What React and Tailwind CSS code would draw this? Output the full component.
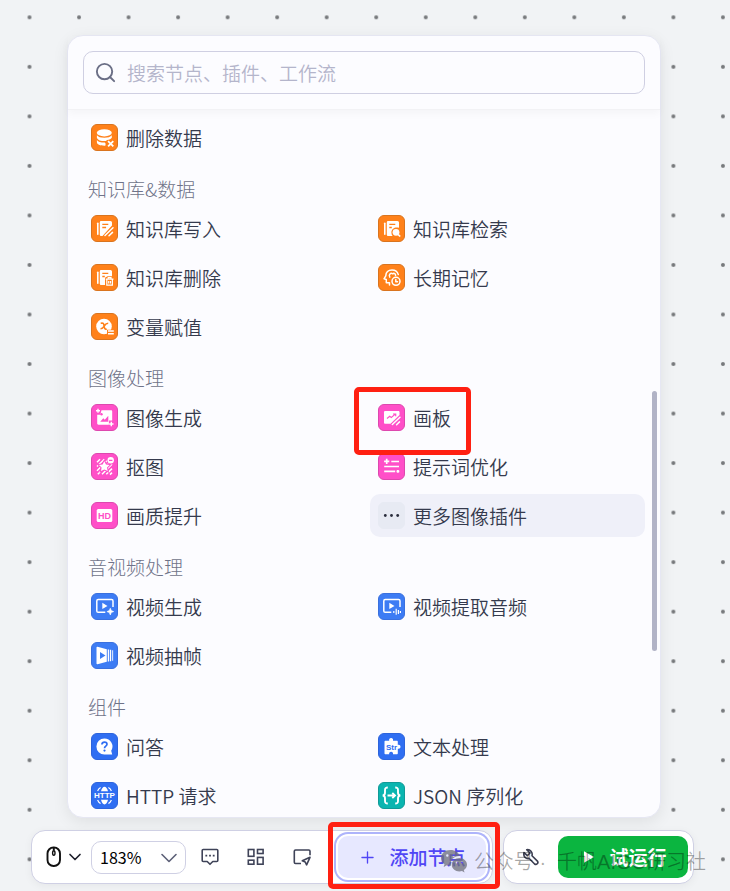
import { ChevronDown, Plus, Search } from 'lucide-react'

const tones = {
  orange: 'bg-[#ff811a] border-[#d9741f]',
  pink: 'bg-[#ff4fc8] border-[#dd48ae]',
  blue: 'bg-[#3d7cf4] border-[#3a70de]',
  deepBlue: 'bg-[#2f6ef2] border-[#2d64dc]',
  teal: 'bg-[#0ab5b0] border-[#109a97]',
  plain: 'bg-[#e7eaf3] border-[#e7eaf3]',
}

// Glyphs are drawn on a 27 x 27 grid, white unless cut out with the tile colour
const glyphs = {
  dbDelete: (
    <>
      <ellipse cx="13.3" cy="8.8" rx="7.5" ry="3.6" fill="#fff" />
      <path d="M5.900 11.300c1.200 1.700 4 2.500 7.400 2.500s6.300-.8 7.500-2.500v2.500c-.8 1.200-2.400 2-4.600 2.300l-1.400 1c-4.600.2-8.100-1-8.900-3.200z" fill="#fff" />
      <path d="M5.900 15.900c1.200 1.900 4.400 2.700 7.800 2.600l1 1.300-.4 1.900c-4.800.2-8.400-1.200-8.400-3.400z" fill="#fff" />
      <path d="M17.100 17.200l5.200 5.200M22.300 17.200l-5.200 5.200" stroke="#fff" strokeWidth="1.800" />
    </>
  ),
  docWrite: (
    <>
      <path d="M6.800 8.200v11" stroke="#fff" strokeWidth="1.600" strokeLinecap="round" />
      <path d="M10 6h9.500a1.500 1.500 0 0 1 1.500 1.500v3L11.500 21H10a1.200 1.200 0 0 1-1.200-1.200V7.200A1.200 1.200 0 0 1 10 6z" fill="#fff" />
      <path d="M11.300 9.300h6M11.300 12.500h3.800" stroke="#ff811a" strokeWidth="1.300" />
      <path d="M14 20.500l8-7.800M18 20.800l3.500-3.400" stroke="#fff" strokeWidth="1.500" strokeLinecap="round" />
    </>
  ),
  docSearch: (
    <>
      <path d="M6.800 8.200v11" stroke="#fff" strokeWidth="1.600" strokeLinecap="round" />
      <path d="M10 6h9.500a1.500 1.500 0 0 1 1.500 1.500v5.300c-3.900-1.300-7.600 1-7.600 4.600 0 1.400.4 2.600 1.200 3.600H10a1.200 1.200 0 0 1-1.200-1.200V7.200A1.200 1.200 0 0 1 10 6z" fill="#fff" />
      <path d="M11.300 9.300h6M11.300 12.500h2.500" stroke="#ff811a" strokeWidth="1.300" />
      <circle cx="18" cy="17.300" r="3.400" fill="#fff" />
      <path d="M20 19.300l2.200 2.200" stroke="#fff" strokeWidth="1.700" />
    </>
  ),
  docDelete: (
    <>
      <path d="M6.800 8.200v11" stroke="#fff" strokeWidth="1.600" strokeLinecap="round" />
      <path d="M10 6h9.500a1.500 1.500 0 0 1 1.500 1.500v4.800h-4.500l-2.500 1.500V21h-4a1.200 1.200 0 0 1-1.200-1.200V7.200A1.200 1.200 0 0 1 10 6z" fill="#fff" />
      <path d="M11.300 9.300h6M11.300 12.500h2.500" stroke="#ff811a" strokeWidth="1.300" />
      <path d="M14.700 15.200h7.800M17.200 14.900v-1.200h2.800v1.200M15.800 15.500v5.700h5.600v-5.700M17.700 17v2.500M19.500 17v2.500" stroke="#fff" strokeWidth="1.200" fill="none" />
    </>
  ),
  memory: (
    <g fill="none" stroke="#fff" strokeWidth="1.500" strokeLinecap="round" strokeLinejoin="round">
      <path d="M11.500 21v-2.200H8.300v-3.300L6 14.800l1.800-3C8 8.300 10.500 6 14 6c3.200 0 5.500 1.700 6.300 4.600" />
      <path d="M11.800 13.200c-1.500-2.700 1-4.800 2.800-3.400 1.500-1 3.100 0 3 1.700" />
      <circle cx="18" cy="17.300" r="4" />
      <path d="M17.800 15.500v2.200h1.700" />
    </g>
  ),
  assign: (
    <>
      <circle cx="13" cy="13.500" r="7.800" fill="#fff" />
      <path d="M16 16.800h7v5h-7z" fill="#ff811a" />
      <path d="M9.700 10.300c2.900-.6 2.900 0 3.400 2.800s.9 3.500 2.600 2.800M17.200 10.300c-2 0-3.100 1.400-4 2.800s-1.900 2.700-3.700 2.700" stroke="#ff811a" strokeWidth="1.600" fill="none" />
      <path d="M17 18h5.800M17 20.800h5.800" stroke="#fff" strokeWidth="1.400" />
    </>
  ),
  imageGen: (
    <>
      <path d="M10.500 6.200h9.500c.8 0 1.200.5 1.200 1.200v9.100h-3.300v4.300H7.500c-.8 0-1.300-.5-1.300-1.200v-8.800h3z" fill="#fff" />
      <path d="M9.200 17.800l3.100-3.500 1.500 1.400 3.500-4v6.100z" fill="#ff4fc8" />
      <circle cx="10.500" cy="10.300" r="1.200" fill="#ff4fc8" />
      <path d="M7 4.700v4M5 6.700h4M20.300 17.800v4.400M18.100 20h4.400" stroke="#fff" strokeWidth="1.400" />
    </>
  ),
  cutout: (
    <>
      <path d="M6 9.200l3-3M6 13.500l7.300-7.300M6 17.800L16 7.800M6.800 21.300l14-14M11 21.300l10-10M15.300 21.300l5.700-5.700M19 21.600l2-2" stroke="#fff" strokeWidth="1.500" />
      <path d="M13.300 8.300l1.700 3.200 3.600.5-2.600 2.500.7 3.600-3.400-1.700L10 18.100l.6-3.600L8 12l3.600-.5z" fill="#fff" stroke="#ff4fc8" strokeWidth="2" paintOrder="stroke" />
      <circle cx="19.700" cy="7.300" r="3.200" fill="#fff" stroke="#ff4fc8" strokeWidth="1.600" paintOrder="stroke" />
      <path d="M18 7.300h3.400" stroke="#ff4fc8" strokeWidth="1.300" />
    </>
  ),
  hd: (
    <>
      <rect x="5.700" y="7" width="15.600" height="13" rx="1.600" fill="#fff" />
      <text x="13.500" y="16.700" textAnchor="middle" fill="#ff4fc8" className="font-['Liberation_Sans'] text-[9px] font-bold">HD</text>
    </>
  ),
  board: (
    <>
      <path d="M7.300 7h12.900c.8 0 1.300.5 1.300 1.300v2.700l-9 8.700H7.300c-.8 0-1.300-.5-1.300-1.300V8.300c0-.8.500-1.300 1.300-1.300z" fill="#fff" />
      <path d="M9 14.500l2.700-2.300 1.600 1.200 4-3.300M15 10h2.700v2.300" stroke="#ff4fc8" strokeWidth="1.200" fill="none" />
      <path d="M14.300 20.500l7.700-7.200M18.600 20.700l2.900-2.800" stroke="#fff" strokeWidth="1.500" strokeLinecap="round" />
    </>
  ),
  prompt: (
    <path d="M8.700 5.700v5.200M6.100 8.300h5.200M13.300 8.500h7.700M6.200 13.500H21M6.200 18.300h11M18.500 18.300h2.800M19.900 16.900v2.800" stroke="#fff" strokeWidth="1.700" />
  ),
  more: (
    <g fill="#2a2d3c">
      <circle cx="7.300" cy="13.500" r="1.400" />
      <circle cx="13.500" cy="13.500" r="1.400" />
      <circle cx="19.700" cy="13.500" r="1.400" />
    </g>
  ),
  videoGen: (
    <>
      <path d="M14.300 19.300H7.200c-.8 0-1.400-.6-1.400-1.400V8c0-.8.600-1.400 1.400-1.400h13.400c.8 0 1.400.6 1.400 1.400v6" stroke="#fff" strokeWidth="1.500" fill="none" />
      <path d="M11.300 9.800v6.200l5.200-3.100z" fill="#fff" />
      <path d="M19.300 15.200l1 2.400 2.400 1-2.400 1-1 2.400-1-2.400-2.400-1 2.400-1z" fill="#fff" stroke="#fff" strokeWidth=".6" />
    </>
  ),
  videoAudio: (
    <>
      <path d="M13.300 19.300H7.200c-.8 0-1.400-.6-1.400-1.400V8c0-.8.600-1.400 1.400-1.400h13.400c.8 0 1.400.6 1.400 1.400v6" stroke="#fff" strokeWidth="1.500" fill="none" />
      <path d="M11.300 9.800v6.200l5.200-3.100z" fill="#fff" />
      <path d="M15.800 18v2M18.200 15.800v6M20.400 17v4M22.400 18v2" stroke="#fff" strokeWidth="1.200" />
    </>
  ),
  frames: (
    <>
      <path d="M6.500 4.800l9.300 2.400v12.600l-9.300 2.400c-.6.100-1-.3-1-.8V5.600c0-.6.400-.9 1-.8z" fill="#fff" />
      <path d="M9 10v7l5.500-3.500z" fill="#3d7cf4" />
      <path d="M17.400 7.500v12M19.500 7.800v11.400" stroke="#fff" strokeWidth="1.300" />
      <path d="M21.600 8.200v10.600" stroke="#fff" strokeWidth="1.100" opacity=".8" />
    </>
  ),
  ask: (
    <>
      <path d="M13.400 5.500a8 8 0 0 1 6.800 12.200l1 3.800h-7.800a8 8 0 0 1 0-16z" fill="#fff" />
      <path d="M10.900 11.500c.1-1.500 1.100-2.400 2.600-2.400s2.500.9 2.500 2.200c0 1.900-2.500 1.900-2.500 3.900" stroke="#2f6ef2" strokeWidth="1.700" fill="none" />
      <circle cx="13.500" cy="17.600" r="1.100" fill="#2f6ef2" />
    </>
  ),
  http: (
    <>
      <path d="M10 9.300c.8-3 2-4.600 3.500-4.600s2.700 1.600 3.500 4.600zM10 17.800c.8 3 2 4.600 3.500 4.600s2.700-1.600 3.500-4.600z" fill="#fff" />
      <path d="M6.600 9c.6-1.500 1.700-2.800 3-3.500M20.400 9c-.6-1.500-1.700-2.800-3-3.500M6.600 18c.6 1.500 1.700 2.800 3 3.500M20.400 18c-.6 1.500-1.700 2.800-3 3.500" stroke="#fff" strokeWidth="1.200" fill="none" />
      <text x="13.500" y="16.200" textAnchor="middle" fill="#fff" className="font-['Liberation_Sans'] text-[8px] font-bold">HTTP</text>
    </>
  ),
  str: (
    <>
      <path d="M7.500 7.700h3.700c-.4-1.700.5-2.700 1.900-2.700s2.300 1 1.900 2.700h3.800c.6 0 1 .4 1 1v3.200c1.700-.4 2.700.5 2.700 1.900s-1 2.300-2.700 1.900v4.600c0 .6-.4 1-1 1H15c.3-1.600-.5-2.500-1.900-2.500s-2.200.9-1.900 2.500H7.500c-.6 0-1-.4-1-1V8.700c0-.6.4-1 1-1z" fill="#fff" />
      <text x="13.600" y="17" textAnchor="middle" fill="#2f6ef2" className="font-['Liberation_Sans'] text-[8px] font-bold">Str</text>
    </>
  ),
  json: (
    <path d="M9.800 5.500C7.300 5.500 7 6.300 7 8.300v2.500c0 1.500-.6 2.500-2.300 2.700 1.700.2 2.300 1.200 2.300 2.700v2.500c0 2 .3 2.800 2.800 2.800M17.200 5.500c2.500 0 2.800.8 2.800 2.800v2.500c0 1.500.6 2.500 2.300 2.700-1.700.2-2.300 1.200-2.300 2.700v2.500c0 2-.3 2.800-2.800 2.800M9.500 13.500h7.300M14.300 10.900l2.700 2.600-2.700 2.600" stroke="#fff" strokeWidth="1.900" fill="none" />
  ),
}

const sections = [
  { items: [{ label: '删除数据', glyph: 'dbDelete', tone: 'orange' }] },
  {
    title: '知识库&数据',
    items: [
      { label: '知识库写入', glyph: 'docWrite', tone: 'orange' },
      { label: '知识库检索', glyph: 'docSearch', tone: 'orange' },
      { label: '知识库删除', glyph: 'docDelete', tone: 'orange' },
      { label: '长期记忆', glyph: 'memory', tone: 'orange' },
      { label: '变量赋值', glyph: 'assign', tone: 'orange' },
    ],
  },
  {
    title: '图像处理',
    items: [
      { label: '图像生成', glyph: 'imageGen', tone: 'pink' },
      { label: '画板', glyph: 'board', tone: 'pink', marked: true },
      { label: '抠图', glyph: 'cutout', tone: 'pink' },
      { label: '提示词优化', glyph: 'prompt', tone: 'pink' },
      { label: '画质提升', glyph: 'hd', tone: 'pink' },
      { label: '更多图像插件', glyph: 'more', tone: 'plain', active: true },
    ],
  },
  {
    title: '音视频处理',
    items: [
      { label: '视频生成', glyph: 'videoGen', tone: 'blue' },
      { label: '视频提取音频', glyph: 'videoAudio', tone: 'blue' },
      { label: '视频抽帧', glyph: 'frames', tone: 'blue' },
    ],
  },
  {
    title: '组件',
    items: [
      { label: '问答', glyph: 'ask', tone: 'deepBlue' },
      { label: '文本处理', glyph: 'str', tone: 'deepBlue' },
      { label: 'HTTP 请求', glyph: 'http', tone: 'deepBlue' },
      { label: 'JSON 序列化', glyph: 'json', tone: 'teal' },
    ],
  },
]

function DotGrid() {
  return (
    <svg className="absolute inset-0 h-full w-full" aria-hidden="true">
      <pattern id="dots" x="4.750" y="-7.450" width="49.530" height="49.530" patternUnits="userSpaceOnUse">
        <circle cx="24.760" cy="24.760" r="2" fill="#76787b" />
      </pattern>
      <rect width="100%" height="100%" fill="url(#dots)" />
    </svg>
  )
}

function NodeItem({ item }) {
  return (
    <li className="relative">
      <button
        type="button"
        className={`flex h-[43px] w-full items-center gap-2 rounded-[10px] px-2 text-left font-[350] ${item.active ? 'bg-[#eff0f9]' : ''}`}
      >
        <span className={`h-[27px] w-[27px] shrink-0 overflow-hidden rounded-md border ${tones[item.tone]}`}>
          <svg viewBox="1 1 25 25" className="block h-full w-full" fill="none" aria-hidden="true">
            {glyphs[item.glyph]}
          </svg>
        </span>
        {item.label}
      </button>
      {item.marked && (
        <span className="pointer-events-none absolute -top-[9px] -left-4 z-10 h-[68px] w-[117px] rounded-[5px] border-5 border-[#ff2012]" />
      )}
    </li>
  )
}

function NodePanel() {
  return (
    <section className="relative mr-[33px] ml-9 rounded-2xl border border-[#e6e7f3] bg-[#fcfcff] shadow-[0_4px_16px_rgba(0,0,0,0.08)]">
      <div className="border-b border-[#f2f2f5] px-[15px] py-[15px] shadow-[0_4px_8px_rgba(0,0,0,0.03)]">
        <label className="flex h-[43px] items-center gap-[10px] rounded-[10px] border border-[#cfcfe2] px-[10px]">
          <Search size={23} strokeWidth={2} className="shrink-0 text-[#6b6f86]" />
          <input
            type="text"
            aria-label="搜索节点、插件、工作流"
            placeholder="搜索节点、插件、工作流"
            className="w-full bg-transparent font-[350] outline-none placeholder:text-[#b4b5cb]"
          />
        </label>
      </div>
      <div className="px-[15px] pt-[6px]">
        {sections.map((section, i) => (
          <div key={i}>
            {section.title && (
              <h3 className="pt-4 pb-1 pl-[5px] leading-7 font-light text-[#6f7389]">{section.title}</h3>
            )}
            <ul className="grid grid-cols-2 gap-x-3 gap-y-[6px]">
              {section.items.map((item) => (
                <NodeItem key={item.label} item={item} />
              ))}
            </ul>
          </div>
        ))}
      </div>
      <div className="absolute top-[355px] right-[3px] h-[260px] w-[5px] rounded-full bg-[#b1b3c6]" />
    </section>
  )
}

function MouseIcon() {
  return (
    <svg width="16" height="22" viewBox="0 0 16 22" fill="none" stroke="#111" strokeWidth="1.900" aria-hidden="true">
      <rect x="1.500" y="1.500" width="12.500" height="18.500" rx="6" />
      <path d="M7.800 1.500v3" />
      <ellipse cx="7.800" cy="7" rx="1.200" ry="2.300" strokeWidth="1.400" />
    </svg>
  )
}

function CommentIcon() {
  return (
    <svg width="18" height="18" viewBox="0 0 18 18" fill="none" stroke="#3f4358" strokeWidth="1.600" strokeLinejoin="round" aria-hidden="true">
      <path d="M2.200 1.500h13.600c.6 0 1 .4 1 1v10c0 .6-.4 1-1 1h-4L9 16.300l-2.800-2.800h-4c-.6 0-1-.4-1-1v-10c0-.6.4-1 1-1z" />
      <path d="M4.400 7.600h1.800M8.100 7.600h1.800M11.800 7.600h1.800" strokeWidth="1.800" />
    </svg>
  )
}

function LayoutIcon() {
  return (
    <svg width="18" height="18" viewBox="0 0 18 18" fill="none" stroke="#3f4358" strokeWidth="1.600" aria-hidden="true">
      <rect x="1.300" y="1.500" width="5.600" height="6.800" />
      <rect x="10.500" y="1.500" width="5.600" height="4" />
      <rect x="1.300" y="12.200" width="5.600" height="4" />
      <rect x="10.500" y="9.400" width="5.600" height="6.800" />
    </svg>
  )
}

function CursorPanelIcon() {
  return (
    <svg width="19" height="18" viewBox="0 0 19 18" fill="none" stroke="#3f4358" strokeWidth="1.600" strokeLinejoin="round" aria-hidden="true">
      <path d="M8 15.500H2.500c-.7 0-1.200-.5-1.200-1.200V3.200C1.300 2.500 1.800 2 2.500 2h13.300c.7 0 1.200.5 1.200 1.200v4" />
      <path d="M17 9.300l-7.700 3.500 2.900 1.200 1.400 2.900z" />
    </svg>
  )
}

function WrenchIcon() {
  return (
    <svg width="18" height="18" viewBox="0 0 18 18" fill="none" stroke="#3a3d50" strokeWidth="1.600" strokeLinejoin="round" aria-hidden="true">
      <path d="M4.700 1.700L8 5 5.300 7.700 2 4.600c-1 3.600 1.800 6.700 5.200 5.900l5.400 5.500c1.800 1.300 4.300-1 2.800-2.900L10 7.800C10.900 4.300 8.200 1 4.700 1.700z" />
    </svg>
  )
}

function Watermark() {
  return (
    <div
      className="pointer-events-none absolute top-[18px] -right-[12px] z-20 flex items-center gap-[6px] font-['Liberation_Sans','Noto_Sans_CJK_SC',sans-serif] text-[20px] leading-7 font-[350] whitespace-nowrap text-black/35"
      aria-hidden="true"
    >
      <svg width="28" height="26" viewBox="0 0 28 26" fill="#6d6f7a">
        <path opacity=".75" d="M10.500 1C5 1 1 4.500 1 9c0 2.600 1.300 4.700 3.500 6.200L3.600 18l3.300-1.700c1.100.3 2.300.5 3.600.5h.6c-1.600-5.600 3-10 8.700-9.700C18.900 3.500 15.100 1 10.500 1zM7.300 5.300a1.200 1.200 0 1 1 0 2.400 1.200 1.200 0 0 1 0-2.400zm6.400 0a1.200 1.200 0 1 1 0 2.400 1.200 1.200 0 0 1 0-2.400z" fillRule="evenodd" />
        <path opacity=".75" d="M27 15.700c0-3.800-3.500-6.700-7.600-6.700s-7.600 2.900-7.600 6.700 3.400 6.700 7.600 6.700c.9 0 1.800-.1 2.600-.4l2.500 1.400-.7-2.300c1.900-1.200 3.200-3.200 3.200-5.400zM16.800 12.500a1 1 0 1 1 0 2 1 1 0 0 1 0-2zm5.200 0a1 1 0 1 1 0 2 1 1 0 0 1 0-2z" fillRule="evenodd" />
      </svg>
      <span className="flex gap-[11px]">
        <span>公众号 ·</span>
        <span>千帆AIGC研习社</span>
      </span>
    </div>
  )
}

function Toolbar() {
  return (
    <footer className="relative mt-3 flex gap-[10px]">
      <div className="flex flex-1 items-center justify-between rounded-[14px] border border-[#cfd0e4] bg-white py-[5px] pr-[6px] pl-[14px] shadow-[0_2px_8px_rgba(0,0,0,0.05)]">
        <div className="flex items-center gap-[6px]">
          <button type="button" aria-label="交互模式" className="flex items-center gap-[3px]">
            <MouseIcon />
            <ChevronDown size={20} strokeWidth={2} className="text-[#1d1f2b]" />
          </button>
          <div className="relative">
            <select
              aria-label="缩放"
              className="block h-[33px] w-[95px] appearance-none rounded-[10px] border border-[#cfd0e4] bg-white pl-2 text-[16px] leading-5 text-black"
            >
              <option>183%</option>
            </select>
            <ChevronDown size={28} strokeWidth={1.4} className="pointer-events-none absolute top-[3px] right-[3px] text-[#5d6178]" />
          </div>
        </div>
        <div className="flex items-center gap-[26px]">
          <div className="flex items-center gap-7">
            <button type="button" aria-label="注释"><CommentIcon /></button>
            <button type="button" aria-label="优化布局"><LayoutIcon /></button>
            <button type="button" aria-label="缩略图"><CursorPanelIcon /></button>
          </div>
          <div className="relative">
            <button
              type="button"
              className="flex h-[42px] w-[148px] items-center justify-center gap-3 rounded-[10px] bg-[#e7e8ff] font-medium text-[#5046f5] ring-2 ring-[#aeb4fb] ring-offset-2"
            >
              <Plus size={19} strokeWidth={1.7} />
              添加节点
            </button>
            <span className="pointer-events-none absolute -top-[14px] -left-[10px] z-30 h-[67px] w-[172px] rounded-[5px] border-5 border-[#ff2012]" />
          </div>
        </div>
      </div>
      <div className="flex items-center gap-[18px] rounded-[14px] border border-[#cfd0e4] bg-white py-[5px] pr-[5px] pl-[18px] shadow-[0_2px_8px_rgba(0,0,0,0.05)]">
        <button type="button" aria-label="调试"><WrenchIcon /></button>
        <button
          type="button"
          className="flex h-[42px] w-[130px] items-center justify-center gap-[14px] rounded-[10px] bg-[#0bb540] pl-1 font-bold text-white"
        >
          <svg width="12" height="14" viewBox="0 0 12 14" fill="#fff" aria-hidden="true">
            <path d="M1 1.200v11.600L11 7z" />
          </svg>
          试运行
        </button>
      </div>
      <Watermark />
    </footer>
  )
}

export default function App() {
  return (
    <main className="relative min-h-screen overflow-hidden bg-[#f1f3f5] pt-[35px] pr-9 pb-[7px] pl-[31px] font-['Noto_Sans_CJK_SC',sans-serif] text-[19px] leading-7 text-[#353a4d]">
      <DotGrid />
      <NodePanel />
      <Toolbar />
    </main>
  )
}
